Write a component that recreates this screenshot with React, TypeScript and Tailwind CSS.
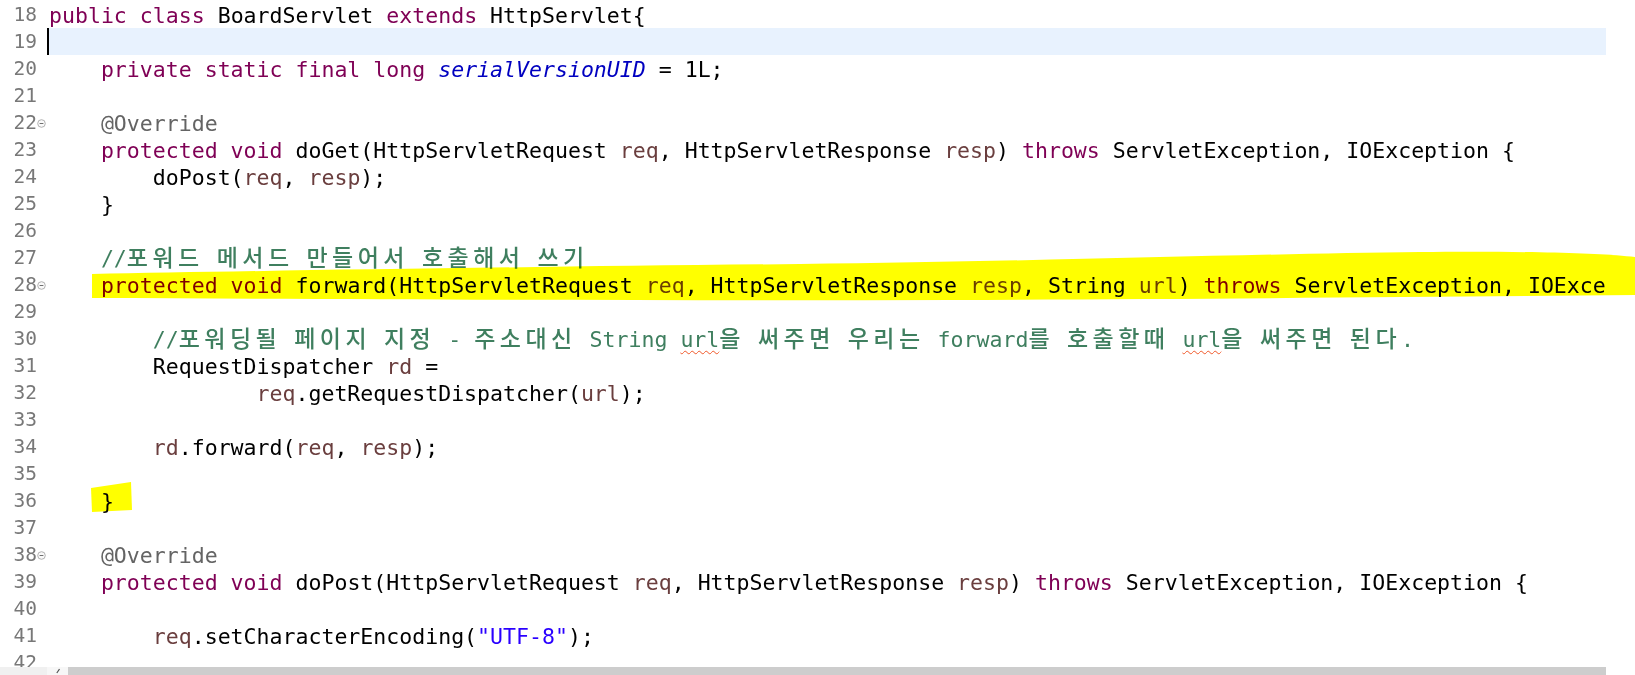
import React from "react";
import clsx from "clsx";

type Tok = [string, string?];

const KIND: Record<string, string> = {
  kw: "text-[#7f0055]",
  v: "text-[#6a3e3e]",
  fld: "text-[#0000c0] italic",
  ann: "text-[#646464]",
  cm: "text-[#3f7f5f]",
  str: "text-[#2a00ff]",
  sp: "text-[#3f7f5f] underline decoration-wavy decoration-[#f0582a] decoration-1 underline-offset-[3px]",
};

// lines 18..42 of the editor
const LINES: { n: number; fold?: boolean; toks: Tok[] }[] = [
  { n: 18, toks: [["public", "kw"], [" "], ["class", "kw"], [" BoardServlet "], ["extends", "kw"], [" HttpServlet{"]] },
  { n: 19, toks: [] },
  { n: 20, toks: [["    "], ["private static final long", "kw"], [" "], ["serialVersionUID", "fld"], [" = 1L;"]] },
  { n: 21, toks: [] },
  { n: 22, fold: true, toks: [["    "], ["@Override", "ann"]] },
  {
    n: 23,
    toks: [["    "], ["protected void", "kw"], [" doGet(HttpServletRequest "], ["req", "v"], [", HttpServletResponse "], ["resp", "v"], [") "], ["throws", "kw"], [" ServletException, IOException {"]],
  },
  { n: 24, toks: [["        doPost("], ["req", "v"], [", "], ["resp", "v"], [");"]] },
  { n: 25, toks: [["    }"]] },
  { n: 26, toks: [] },
  { n: 27, toks: [["    "], ["//포워드 메서드 만들어서 호출해서 쓰기", "cm"]] },
  {
    n: 28,
    fold: true,
    toks: [["    "], ["protected void", "kw"], [" forward(HttpServletRequest "], ["req", "v"], [", HttpServletResponse "], ["resp", "v"], [", String "], ["url", "v"], [") "], ["throws", "kw"], [" ServletException, IOException {"]],
  },
  { n: 29, toks: [] },
  {
    n: 30,
    toks: [["        "], ["//포워딩될 페이지 지정 - 주소대신 String ", "cm"], ["url", "sp"], ["을 써주면 우리는 forward를 호출할때 ", "cm"], ["url", "sp"], ["을 써주면 된다.", "cm"]],
  },
  { n: 31, toks: [["        RequestDispatcher "], ["rd", "v"], [" ="]] },
  { n: 32, toks: [["                "], ["req", "v"], [".getRequestDispatcher("], ["url", "v"], [");"]] },
  { n: 33, toks: [] },
  { n: 34, toks: [["        "], ["rd", "v"], [".forward("], ["req", "v"], [", "], ["resp", "v"], [");"]] },
  { n: 35, toks: [] },
  { n: 36, toks: [["    }"]] },
  { n: 37, toks: [] },
  { n: 38, fold: true, toks: [["    "], ["@Override", "ann"]] },
  {
    n: 39,
    toks: [["    "], ["protected void", "kw"], [" doPost(HttpServletRequest "], ["req", "v"], [", HttpServletResponse "], ["resp", "v"], [") "], ["throws", "kw"], [" ServletException, IOException {"]],
  },
  { n: 40, toks: [] },
  { n: 41, toks: [["        "], ["req", "v"], [".setCharacterEncoding("], ['"UTF-8"', "str"], [");"]] },
  { n: 42, toks: [] },
];

// hangul glyphs take about two cells in the editor
function hangul(text: string) {
  return text.split(/([\uAC00-\uD7A3]+)/).map((part, i) =>
    /[\uAC00-\uD7A3]/.test(part) ? (
      <span key={i} className="text-[23px] font-medium tracking-[4.45px]">
        {part}
      </span>
    ) : (
      part
    )
  );
}

function FoldMark() {
  return (
    <svg width="9" height="9" viewBox="0 0 9 9">
      <circle cx="4.5" cy="4.5" r="3.8" fill="#fafafa" stroke="#a8a8a8" strokeWidth="0.9" />
      <line x1="2.6" y1="4.5" x2="6.4" y2="4.5" stroke="#6e6e6e" strokeWidth="1" />
    </svg>
  );
}

export default function App() {
  return (
    <div className="relative w-[1635px] h-[675px] overflow-hidden bg-white flex flex-col font-['DejaVu_Sans_Mono','Noto_Sans_CJK_KR',monospace]">
      <div className="flex-1 flex min-h-0 overflow-hidden">
        {/* line numbers */}
        <div className="w-[47px] shrink-0 pt-[1px] text-[19.5px] text-[#787878]">
          {LINES.map((l) => (
            <div key={l.n} className="h-[27px] flex items-center">
              <span className="w-[37px] text-right">{l.n}</span>
              <span className="w-[10px] flex items-center pt-[1px]">{l.fold && <FoldMark />}</span>
            </div>
          ))}
        </div>
        {/* code */}
        <div className="w-[1559px] shrink-0 overflow-hidden pt-[1px] text-[21.55px] text-black">
          {LINES.map((l) => (
            <div
              key={l.n}
              className={clsx("relative h-[27px] leading-[27px] whitespace-pre pl-[2px]", l.n === 19 && "bg-[#e8f2fe]")}
            >
              {l.n === 19 && <span className="absolute left-0 top-0 w-[2px] h-[27px] bg-black" />}
              <span className="relative top-[1px]">
                {l.toks.map(([t, k], i) => (
                  <span key={i} className={k ? KIND[k] : undefined}>
                    {hangul(t)}
                  </span>
                ))}
              </span>
            </div>
          ))}
        </div>
        <div className="flex-1" />
      </div>
      {/* horizontal scrollbar */}
      <div className="h-[8px] shrink-0 flex">
        <div className="w-[47px] bg-[#f0f0f0]" />
        <div className="w-[21px] bg-[#f7f7f7] flex justify-center">
          <svg width="8" height="8" viewBox="0 0 8 8">
            <path d="M5.5 2 L2.8 6" stroke="#505050" strokeWidth="1.2" fill="none" />
          </svg>
        </div>
        <div className="w-[1538px] bg-[#cdcdcd]" />
        <div className="flex-1 bg-white" />
      </div>

      {/* yellow highlighter marks */}
      <svg
        className="absolute left-0 top-0 pointer-events-none mix-blend-multiply"
        width="1635"
        height="675"
        viewBox="0 0 1635 675"
      >
        <path
          d="M92,274 C250,271 500,267 800,264 C1050,261 1250,254 1420,252 C1520,251 1600,253 1635,257 L1635,295 C1450,297 1200,299 950,300 C650,301 350,299 92,298 Z"
          fill="#ffff00"
        />
        <path d="M91,488 L131,482 L132,510 L92,512 Z" fill="#ffff00" />
      </svg>
    </div>
  );
}
